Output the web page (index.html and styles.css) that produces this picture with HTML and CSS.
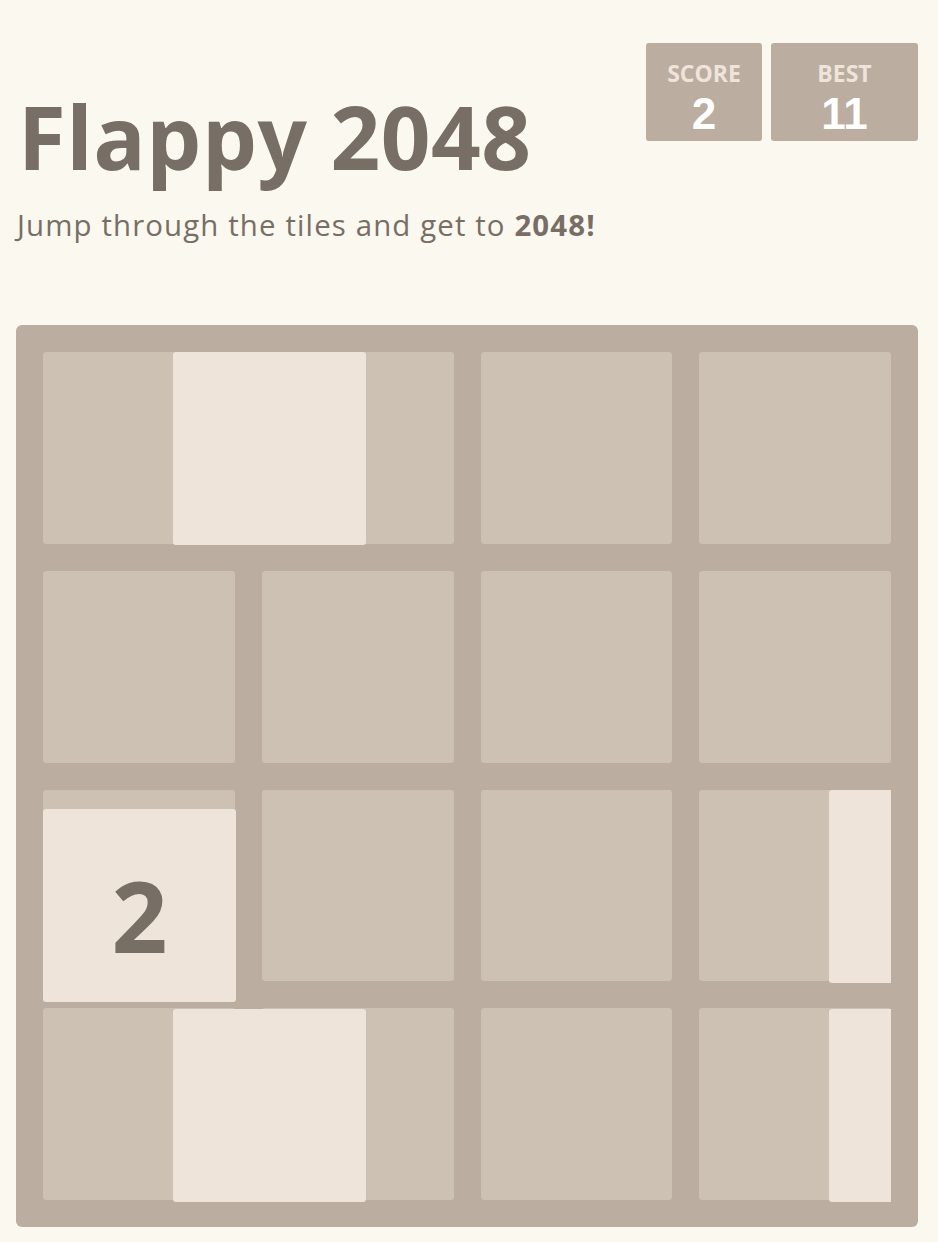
FILE: index.html
```html
<!DOCTYPE html>
<html lang="en">
<head>
<meta charset="utf-8">
<title>Flappy 2048</title>
<link rel="stylesheet" href="styles.css">
</head>
<body>
<div class="page">
  <header class="heading">
    <div class="title-block">
      <h1 class="title">Flappy 2048</h1>
      <p class="intro">Jump through the tiles and get to <strong>2048!</strong></p>
    </div>
    <div class="scores">
      <div class="score-box score-box--score">
        <span class="score-label">SCORE</span>
        <span class="score-value">2</span>
      </div>
      <div class="score-box score-box--best">
        <span class="score-label">BEST</span>
        <span class="score-value">11</span>
      </div>
    </div>
  </header>

  <div class="game">
    <div class="grid">
      <div class="cell"></div><div class="cell"></div><div class="cell"></div><div class="cell"></div>
      <div class="cell"></div><div class="cell"></div><div class="cell"></div><div class="cell"></div>
      <div class="cell"></div><div class="cell"></div><div class="cell"></div><div class="cell"></div>
      <div class="cell"></div><div class="cell"></div><div class="cell"></div><div class="cell"></div>
    </div>
    <div class="tiles">
      <div class="tile tile--pipe-top-mid"></div>
      <div class="tile tile--pipe-top-right"></div>
      <div class="tile tile--pipe-bottom-mid"></div>
      <div class="tile tile--pipe-bottom-right"></div>
      <div class="tile tile--player">2</div>
    </div>
  </div>
</div>
</body>
</html>
```

FILE: styles.css
```css
html, body {
  margin: 0;
  padding: 0;
}

body {
  background: #faf8ef;
  color: #776e65;
  font-family: "Open Sans", "Liberation Sans", sans-serif;
  overflow-x: hidden;
}

.page {
  width: 902px;
  margin-left: 16px;
  padding-top: 43px;
}

.heading {
  display: flex;
  justify-content: space-between;
  align-items: flex-start;
}

.title-block {
  margin-top: 50px;
}

.title {
  margin: 0 0 0 2px;
  font-size: 87px;
  line-height: 87px;
  font-weight: 700;
  letter-spacing: 0.5px;
  color: #776e65;
}

.intro {
  margin: 27px 0 0 1px;
  font-size: 29.4px;
  line-height: 36px;
  font-weight: 400;
  letter-spacing: 1.13px;
}

.intro strong {
  font-weight: 700;
}

.scores {
  display: flex;
  gap: 9px;
}

.score-box {
  background: #bbada0;
  border-radius: 3px;
  height: 98px;
  box-sizing: border-box;
  padding-top: 18px;
  display: flex;
  flex-direction: column;
  align-items: center;
}

.score-box--score {
  width: 116px;
}

.score-box--best {
  width: 147px;
}

.score-label {
  font-family: "Open Sans", sans-serif;
  font-weight: 700;
  font-size: 23px;
  line-height: 24px;
  color: #eee4da;
}

.score-value {
  margin-top: 7px;
  font-family: "Liberation Sans", Arial, sans-serif;
  font-weight: 700;
  font-size: 44px;
  line-height: 44px;
  color: #ffffff;
}

.game {
  position: relative;
  margin-top: 82px;
  background: #bbada0;
  border-radius: 6px;
  padding: 27px;
}

.grid {
  display: grid;
  grid-template-columns: repeat(4, 1fr);
  gap: 27px;
}

.cell {
  aspect-ratio: 1 / 1;
  background: #cdc1b4;
  border-radius: 3px;
}

.tiles {
  position: absolute;
  top: 27px;
  left: 27px;
  right: 27px;
  bottom: 27px;
  overflow-x: clip;
  overflow-y: visible;
}

.tile {
  position: absolute;
  width: 193px;
  height: 193px;
  background: #eee4da;
  border-radius: 3px;
}

.tile--pipe-top-mid { left: 130px; top: 0; }
.tile--pipe-top-right { left: 786px; top: 438px; }
.tile--pipe-bottom-mid { left: 130px; top: 657px; }
.tile--pipe-bottom-right { left: 786px; top: 657px; }

.tile--player {
  left: 0;
  top: 457px;
  box-sizing: border-box;
  padding-top: 19px;
  line-height: 174px;
  text-align: center;
  font-size: 98px;
  font-weight: 700;
  color: #776e65;
}
```
